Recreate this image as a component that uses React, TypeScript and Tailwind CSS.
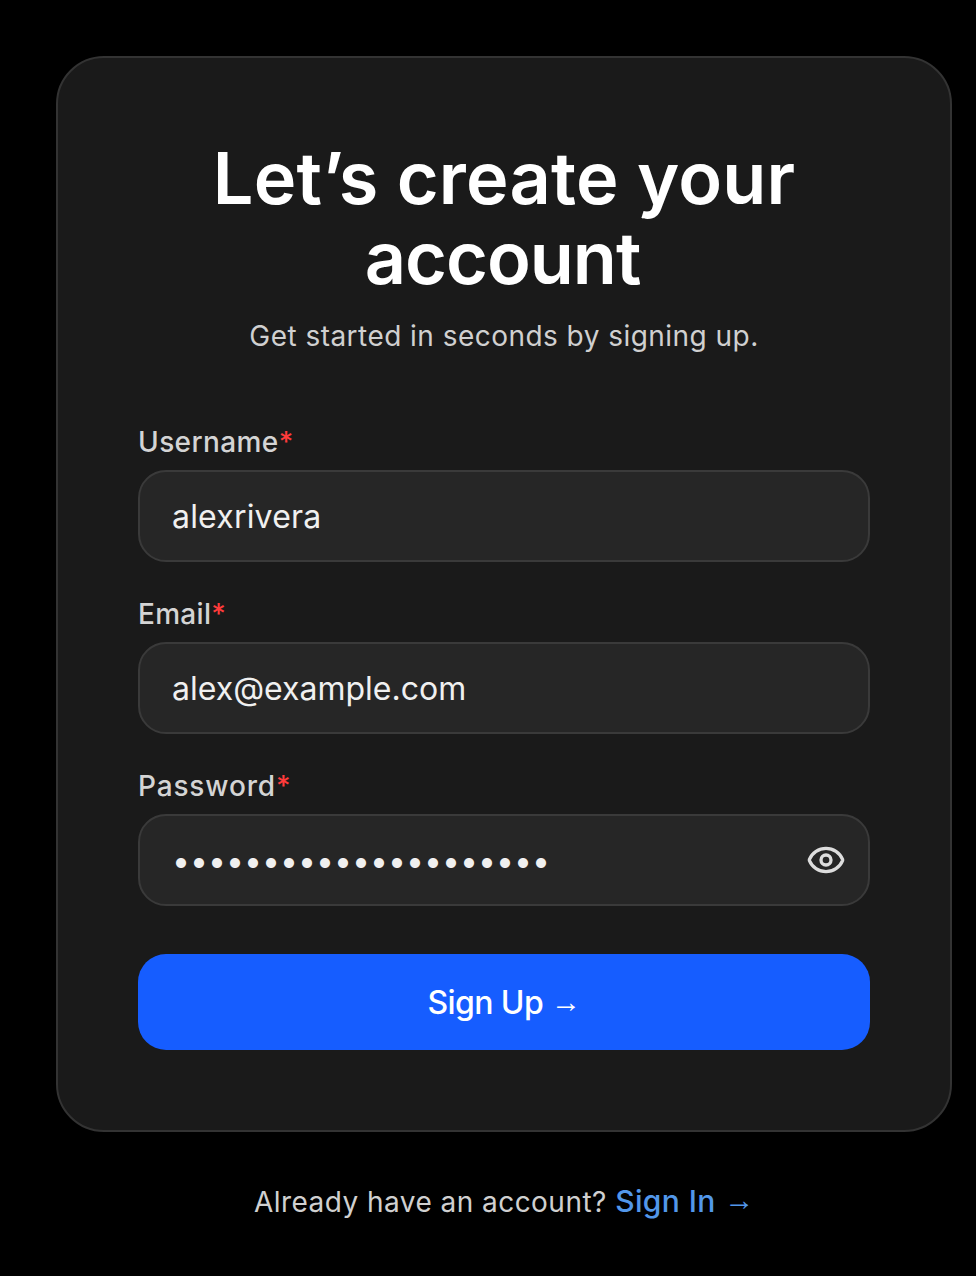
import { Eye } from "lucide-react";

const FIELDS = [
  { label: "Username", labelTracking: "tracking-[0.4px]", value: "alexrivera", valueTracking: "tracking-[0.2px]" },
  { label: "Email", labelTracking: "tracking-[0.3px]", value: "alex@example.com", valueTracking: "tracking-normal" },
  { label: "Password", labelTracking: "tracking-[0.85px]", value: "•••••••••••••••••••••", valueTracking: "tracking-normal", secret: true },
];

export default function App() {
  return (
    <div className="min-h-[1276px] bg-black pl-14 pr-6 pt-14 font-['Inter',sans-serif]">
      <div className="flex h-[1076px] w-[896px] flex-col rounded-[48px] border-2 border-[#333333] bg-[#1a1a1a] px-20 pt-20">
        <h1 className="text-center text-[72px] font-semibold leading-[80px] tracking-[0.18px] text-white">
          Let’s create your <span className="mr-[3px] tracking-[-1px]">account</span>
        </h1>
        <p className="mt-5 text-center text-[28px] leading-[36px] tracking-[0.46px] text-[#d0d0d0]">
          Get started in seconds by signing up.
        </p>

        <div className="mt-[70px] flex flex-col gap-[34px]">
          {FIELDS.map((f) => (
            <div key={f.label}>
              <label className={`block text-[28px] font-medium leading-[36px] text-[#d4d4d4] ${f.labelTracking}`}>
                {f.label}
                <span className="text-[#ff3b3b]">*</span>
              </label>
              <div className="mt-[10px] flex h-[92px] items-center justify-between rounded-[28px] border-2 border-[#3a3a3a] bg-[#262626] pl-8 pr-[22px]">
                <span className={`pt-[1px] text-[32px] text-[#f0f0f0] ${f.valueTracking}`}>{f.value}</span>
                {f.secret && <Eye size={40} strokeWidth={2} className="text-[#dddddd]" />}
              </div>
            </div>
          ))}
        </div>

        <button className="mt-12 h-24 rounded-[28px] bg-[#165dff] pt-[2px] text-[32px] font-medium tracking-[-0.6px] text-white">
          Sign Up <span className="align-[2px] font-['Liberation_Sans',sans-serif] text-[30px] font-normal">→</span>
        </button>
      </div>

      <p className="mt-[48px] text-center text-[28px] leading-[40px] tracking-[0.46px] text-[#d0d0d0]">
        Already have an account?{" "}
        <span className="text-[30px] font-medium tracking-[0.4px] text-[#5297ea]">
          Sign In <span className="align-[2px] font-['Liberation_Sans',sans-serif] font-normal tracking-normal">→</span>
        </span>
      </p>
    </div>
  );
}
